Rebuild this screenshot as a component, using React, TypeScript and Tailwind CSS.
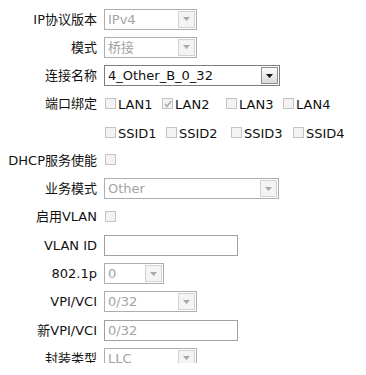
import React from "react";

const font = "font-['DejaVu_Sans','Noto_Sans_CJK_SC',sans-serif]";

function Arrow({ dark }: { dark?: boolean }) {
  return (
    <svg width="7" height="4" viewBox="0 0 7 4">
      <path d="M0 0 L7 0 L3.5 4 Z" fill={dark ? "#111" : "#a8a8a8"} />
    </svg>
  );
}

function Select({
  className,
  value,
  disabled,
}: {
  className: string;
  value: string;
  disabled?: boolean;
}) {
  return (
    <div
      className={
        "flex h-[21px] items-stretch border bg-white " +
        (disabled ? "border-[#a9aeb3] " : "border-[#7d7d7d] ") +
        className
      }
    >
      <div
        className={
          "flex flex-1 items-center overflow-hidden whitespace-nowrap pl-[3px] text-[13px] leading-none " +
          (disabled ? "text-[#a3a3a3]" : "text-[#111]")
        }
      >
        {value}
      </div>
      {disabled ? (
        <div className="m-[1px] flex w-[17px] items-center justify-center border border-[#cfd3d6] bg-[#f4f4f4]">
          <Arrow />
        </div>
      ) : (
        <div className="m-[1px] flex w-[17px] items-center justify-center border border-[#8e8e8e] bg-gradient-to-b from-[#fdfdfd] to-[#d9d9d9]">
          <Arrow dark />
        </div>
      )}
    </div>
  );
}

function Input({ className, value }: { className: string; value?: string }) {
  return (
    <div
      className={
        "flex h-[21px] items-center border border-[#a0a0a0] bg-white pl-[3px] text-[13px] leading-none text-[#a3a3a3] " +
        className
      }
    >
      {value}
    </div>
  );
}

function Check({ checked }: { checked?: boolean }) {
  return (
    <span className="relative mr-[2px] inline-block h-[11px] w-[11px] shrink-0 border border-[#c4c4c4] bg-[#f3f3f3]">
      {checked && (
        <svg
          className="absolute left-[1px] top-[1px]"
          width="8"
          height="8"
          viewBox="0 0 8 8"
        >
          <path d="M1 4 L3 6.5 L7 1" stroke="#a8a8a8" strokeWidth="1.4" fill="none" />
        </svg>
      )}
    </span>
  );
}

function Item({
  label,
  checked,
  className,
}: {
  label: string;
  checked?: boolean;
  className: string;
}) {
  return (
    <div className={"flex items-center text-[13px] leading-none text-[#111] " + className}>
      <Check checked={checked} />
      <span className="pt-[2px]">{label}</span>
    </div>
  );
}

function Row({ label, children }: { label?: string; children: React.ReactNode }) {
  return (
    <div className="flex h-[28.27px] items-center">
      <div className="w-[97px] shrink-0 whitespace-nowrap text-right text-[13px] leading-none text-[#111]">
        {label}
      </div>
      <div className="flex items-center pl-[7px]">{children}</div>
    </div>
  );
}

export default function App() {
  return (
    <div className={"h-[375px] w-[366px] overflow-hidden bg-white " + font}>
      <div className="h-[363px] overflow-hidden pt-[5px]">
        <Row label="IP协议版本">
          <Select className="w-[93px]" value="IPv4" disabled />
        </Row>
        <Row label="模式">
          <Select className="w-[93px]" value="桥接" disabled />
        </Row>
        <Row label="连接名称">
          <Select className="w-[176px]" value="4_Other_B_0_32" />
        </Row>
        <Row label="端口绑定">
          <div className="flex items-center pl-[1px]">
            <Item className="w-[57px]" label="LAN1" />
            <Item className="w-[64px]" label="LAN2" checked />
            <Item className="w-[57px]" label="LAN3" />
            <Item className="w-[57px]" label="LAN4" />
          </div>
        </Row>
        <Row>
          <div className="flex items-center pl-[1px]">
            <Item className="w-[61px]" label="SSID1" />
            <Item className="w-[65px]" label="SSID2" />
            <Item className="w-[62px]" label="SSID3" />
            <Item className="w-[60px]" label="SSID4" />
          </div>
        </Row>
        <Row label="DHCP服务使能">
          <div className="pl-[1px]">
            <Check />
          </div>
        </Row>
        <Row label="业务模式">
          <Select className="w-[175px]" value="Other" disabled />
        </Row>
        <Row label="启用VLAN">
          <div className="pl-[1px]">
            <Check />
          </div>
        </Row>
        <Row label="VLAN ID">
          <Input className="w-[134px]" />
        </Row>
        <Row label="802.1p">
          <Select className="w-[60px]" value="0" disabled />
        </Row>
        <Row label="VPI/VCI">
          <Select className="w-[93px]" value="0/32" disabled />
        </Row>
        <Row label="新VPI/VCI">
          <Input className="w-[134px]" value="0/32" />
        </Row>
        <Row label="封装类型">
          <Select className="w-[93px]" value="LLC" disabled />
        </Row>
      </div>
    </div>
  );
}
